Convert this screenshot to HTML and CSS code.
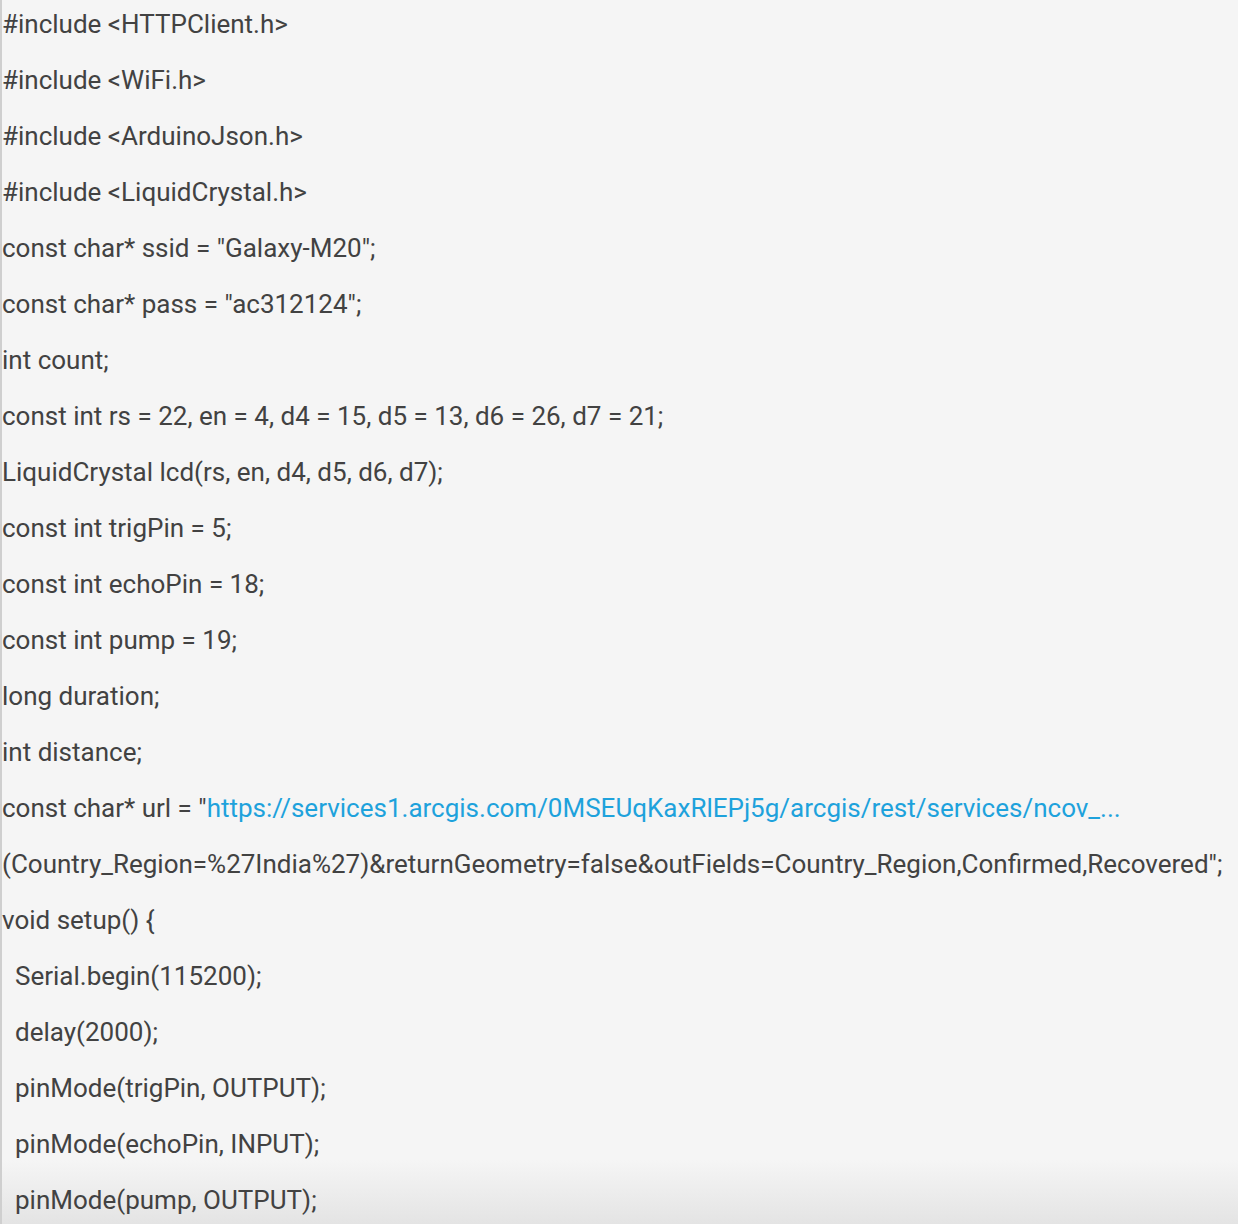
FILE: index.html
```html
<!DOCTYPE html>
<html>
<head>
<meta charset="utf-8">
<link rel="stylesheet" href="styles.css">
</head>
<body>
<div class="code">
<p class="ln">#include &lt;HTTPClient.h&gt;</p>
<p class="ln">#include &lt;WiFi.h&gt;</p>
<p class="ln">#include &lt;ArduinoJson.h&gt;</p>
<p class="ln">#include &lt;LiquidCrystal.h&gt;</p>
<p class="ln">const char* ssid = "Galaxy-M20";</p>
<p class="ln">const char* pass = "ac312124";</p>
<p class="ln">int count;</p>
<p class="ln">const int rs = 22, en = 4, d4 = 15, d5 = 13, d6 = 26, d7 = 21;</p>
<p class="ln">LiquidCrystal lcd(rs, en, d4, d5, d6, d7);</p>
<p class="ln">const int trigPin = 5;</p>
<p class="ln">const int echoPin = 18;</p>
<p class="ln">const int pump = 19;</p>
<p class="ln">long duration;</p>
<p class="ln">int distance;</p>
<p class="ln">const char* url = "<a class="link" href="#">https://services1.arcgis.com/0MSEUqKaxRlEPj5g/arcgis/rest/services/ncov_...</a></p>
<p class="ln">(Country_Region=%27India%27)&amp;returnGeometry=false&amp;outFields=Country_Region,Confirmed,Recovered";</p>
<p class="ln">void setup() {</p>
<p class="ln ind">Serial.begin(115200);</p>
<p class="ln ind">delay(2000);</p>
<p class="ln ind">pinMode(trigPin, OUTPUT);</p>
<p class="ln ind">pinMode(echoPin, INPUT);</p>
<p class="ln ind">pinMode(pump, OUTPUT);</p>
</div>
</body>
</html>
```
FILE: styles.css
```css
html, body {
  margin: 0;
  padding: 0;
}
body {
  height: 1224px;
  overflow: hidden;
  background: linear-gradient(to bottom, #f5f5f5 0, #f5f5f5 1160px, #e4e4e4 1224px);
}
.code {
  border-left: 2px solid #cfcfcf;
  margin-top: -4px;
  font-family: Roboto, "Liberation Sans", sans-serif;
  font-size: 26px;
  color: #424242;
  min-height: 1240px;
}
.ln {
  margin: 0;
  line-height: 56px;
  white-space: nowrap;
}
.ind {
  padding-left: 13px;
}
.link {
  color: #1ea2dc;
  text-decoration: none;
}
```
